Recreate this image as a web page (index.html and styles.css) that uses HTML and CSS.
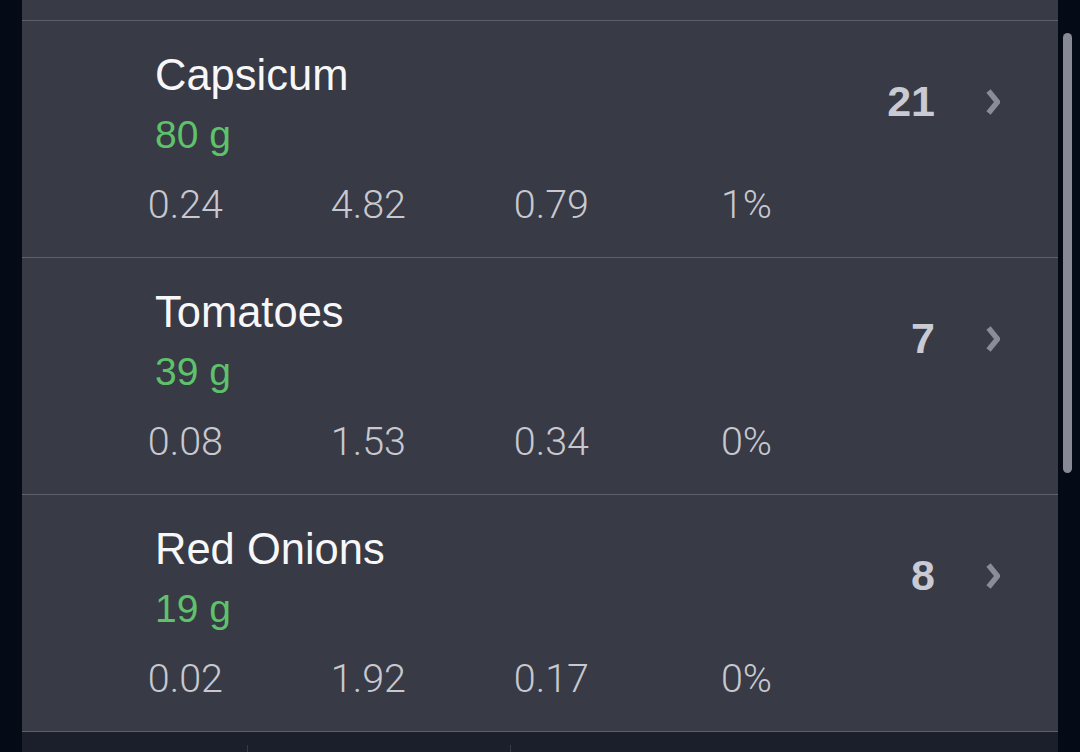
FILE: index.html
```html
<!DOCTYPE html>
<html lang="en">
<head>
  <meta charset="UTF-8">
  <meta name="viewport" content="width=device-width, initial-scale=1.0">
  <title>Ingredients</title>
  <link rel="stylesheet" href="styles.css">
</head>
<body>
  <div class="panel">
    <div class="top-gap"></div>

    <div class="item">
      <div class="head">
        <div class="texts">
          <div class="name">Capsicum</div>
          <div class="amount">80 g</div>
        </div>
        <div class="side">
          <span class="kcal">21</span>
          <svg class="chev" width="14" height="26" viewBox="0 0 14 26"><path d="M2.5 2 L11.5 13 L2.5 24" /></svg>
        </div>
      </div>
      <div class="stats">
        <span>0.24</span><span>4.82</span><span>0.79</span><span>1%</span>
      </div>
    </div>

    <div class="item">
      <div class="head">
        <div class="texts">
          <div class="name">Tomatoes</div>
          <div class="amount">39 g</div>
        </div>
        <div class="side">
          <span class="kcal">7</span>
          <svg class="chev" width="14" height="26" viewBox="0 0 14 26"><path d="M2.5 2 L11.5 13 L2.5 24" /></svg>
        </div>
      </div>
      <div class="stats">
        <span>0.08</span><span>1.53</span><span>0.34</span><span>0%</span>
      </div>
    </div>

    <div class="item">
      <div class="head">
        <div class="texts">
          <div class="name">Red Onions</div>
          <div class="amount">19 g</div>
        </div>
        <div class="side">
          <span class="kcal">8</span>
          <svg class="chev" width="14" height="26" viewBox="0 0 14 26"><path d="M2.5 2 L11.5 13 L2.5 24" /></svg>
        </div>
      </div>
      <div class="stats">
        <span>0.02</span><span>1.92</span><span>0.17</span><span>0%</span>
      </div>
    </div>

    <div class="tabbar">
      <div class="seg seg-first"></div>
      <div class="seg seg-mid"></div>
      <div class="seg seg-rest"></div>
    </div>
  </div>

  <div class="scrollbar"></div>
</body>
</html>
```

FILE: styles.css
```css
html, body {
  margin: 0;
  height: 100%;
  overflow: hidden;
}
body {
  background-color: #050a17;
  font-family: "Liberation Sans", Arial, sans-serif;
  position: relative;
}
.panel {
  margin: 0 22px;
  background-color: #383a45;
}
.top-gap {
  height: 20px;
  border-bottom: 1px solid #5d606b;
}
.item {
  height: 236px;
  border-bottom: 1px solid #5d606b;
}
.head {
  display: flex;
  align-items: center;
  padding: 28px 58px 0 133px;
}
.name {
  font-size: 43.5px;
  line-height: 52px;
  color: #f7f7f9;
}
.amount {
  margin-top: 12px;
  font-size: 39px;
  line-height: 44px;
  color: #5ec26b;
}
.side {
  margin-left: auto;
  margin-bottom: 3px;
  display: flex;
  align-items: center;
}
.kcal {
  font-size: 43px;
  line-height: 43px;
  font-weight: bold;
  color: #c9cad3;
}
.chev {
  margin-left: 51px;
}
.chev path {
  fill: none;
  stroke: #8a8c96;
  stroke-width: 5.5;
}
.stats {
  display: grid;
  grid-template-columns: repeat(4, 183px);
  padding-left: 18px;
  margin-top: 25px;
  font-family: Roboto, "Liberation Sans", sans-serif;
  font-weight: 300;
  font-size: 39.5px;
  line-height: 46px;
  color: #c7c8d0;
}
.stats span {
  text-align: right;
}
.tabbar {
  height: 20px;
  display: flex;
  align-items: flex-end;
  background-color: #1b1f2b;
}
.seg {
  height: 7px;
}
.seg-first {
  width: 225px;
}
.seg-mid {
  width: 262px;
  border-left: 1px solid #363946;
}
.seg-rest {
  flex: 1;
  border-left: 1px solid #363946;
}
.scrollbar {
  position: absolute;
  left: 1063px;
  top: 33px;
  width: 9px;
  height: 440px;
  border-radius: 5px;
  background-color: #878a95;
}
```
